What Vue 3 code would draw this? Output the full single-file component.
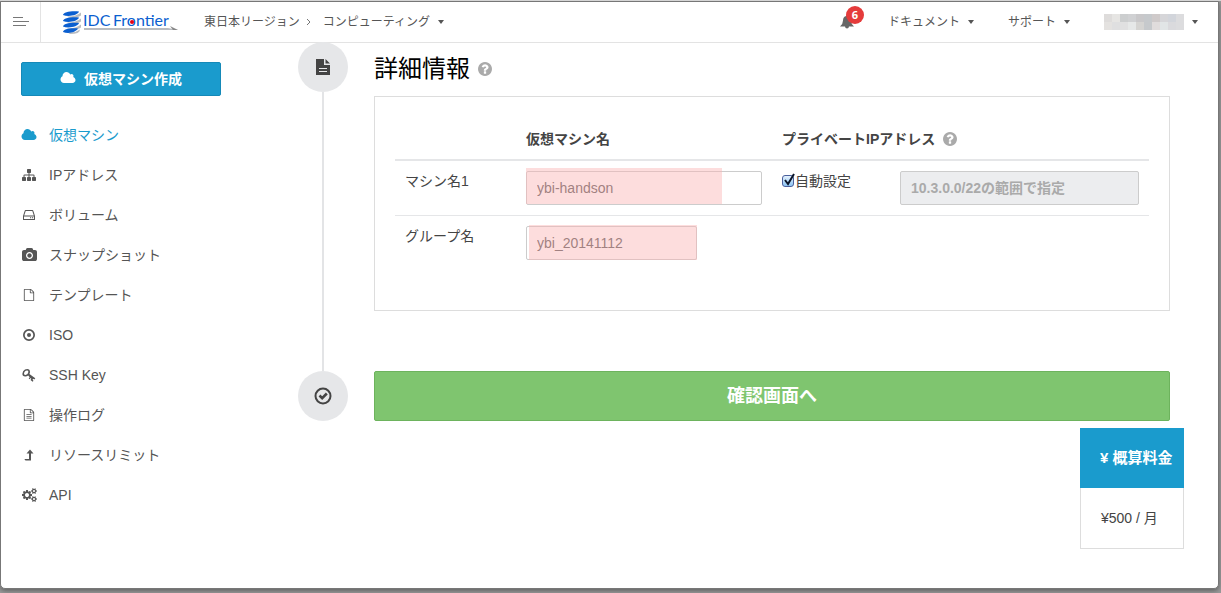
<template>
    <div class="window">
        <header class="topbar">
            <button class="menu-toggle" type="button" aria-label="メニュー">
                <svg width="16" height="10" viewBox="0 0 16 10">
                    <path d="M0 .5h10M0 4.5h16M0 8.5h13" stroke="#777" fill="none" />
                </svg>
            </button>

            <a class="logo" href="#">
                <svg width="118" height="26" viewBox="0 0 118 26">
                    <g fill="#b9bcc0">
                        <path d="M5 7.500Q13 8 19 3.500v3Q16 9 8 9zM5 13.500Q13 14 19 9.500v3Q16 15 8 15zM5 19.500Q13 20 19 15.500v3Q16 21 8 21zM3 22Q12 25 18 20.500Q18 25 8 25z" />
                    </g>
                    <g fill="#0b5fd0">
                        <path d="M1 6C1 3 10 1.500 17 2.500C16 6.500 6 8 1 6z" />
                        <path d="M1 12C1 9 10 7.500 17 8.500C16 12.500 6 14 1 12z" />
                        <path d="M1 17.500C1 14.500 10 13 17 14C16 18 6 19.500 1 17.500z" />
                        <path d="M1 23C1 20 9 18.500 16 19.500C14 23.500 6 25 1 23z" />
                    </g>
                    <text y="17" class="logo-text"><tspan x="21">IDC</tspan><tspan x="51">Frontier</tspan></text>
                    <path d="M22 19h84l10 2H22z" fill="#b9bcc0" />
                    <path d="M108 17l8 4h-5z" fill="#888" />
                    <circle cx="70" cy="13" r="2" fill="#e60012" />
                </svg>
            </a>

            <nav class="breadcrumb">
                <a href="#">東日本リージョン</a>
                <svg class="chevron" width="5" height="8" viewBox="0 0 5 8">
                    <path d="M1 1l3 3-3 3" fill="none" stroke="#777" />
                </svg>
                <a href="#" class="dropdown">コンピューティング<span class="caret"></span></a>
            </nav>

            <div class="topbar-right">
                <button class="bell" type="button" aria-label="お知らせ">
                    <svg width="14" height="14" viewBox="0 0 14 14">
                        <path d="M7 0q.8 0 .8 1Q11 1.600 11 5.500q0 3.500 3 6H9q-.2 2-2 2t-2-2H0q3-2.500 3-6Q3 1.600 6.200 1 6.200 0 7 0z" fill="#666" />
                    </svg>
                    <span class="badge">6</span>
                </button>
                <a href="#" class="dropdown">ドキュメント<span class="caret"></span></a>
                <a href="#" class="dropdown">サポート<span class="caret"></span></a>
                <button class="dropdown account" type="button" aria-label="アカウント">
                    <svg width="80" height="16" viewBox="0 0 10 2" shape-rendering="crispEdges">
                        <rect v-for="(color, i) in accountTiles" :key="i" :x="i % 10" :y="Math.floor(i / 10)"
                            width="1" height="1" :fill="color" />
                    </svg>
                    <span class="caret"></span>
                </button>
            </div>
        </header>

        <div class="body">
            <aside class="sidebar">
                <button class="create" type="button">
                    <svg width="16" height="14" viewBox="0 0 2048 1792">
                        <path :d="cloud" fill="#fff" />
                    </svg>
                    仮想マシン作成
                </button>

                <ul class="menu">
                    <li v-for="item in menu" :key="item.label">
                        <a href="#" :class="{ active: item.active }">
                            <span class="menu-icon">
                                <svg :width="item.width || 14" height="14" :viewBox="item.box || '0 0 1792 1792'">
                                    <path :d="item.path" fill="currentColor" fill-rule="evenodd" />
                                </svg>
                            </span>
                            {{ item.label }}
                        </a>
                    </li>
                </ul>
            </aside>

            <main class="steps">
                <section class="step">
                    <div class="rail">
                        <span class="marker">
                            <svg width="16" height="18" viewBox="0 0 16 18">
                                <path d="M1 1h8v6h6v10H1zM10.500 1L15 5.500h-4.500z" fill="#444" />
                                <path d="M4 10.500h8M4 13.500h8" stroke="#e6e7e9" />
                            </svg>
                        </span>
                        <span class="line"></span>
                    </div>

                    <div class="step-content">
                        <h1>
                            詳細情報
                            <svg class="help" width="14" height="14" viewBox="128 128 1536 1536">
                                <path :d="question" />
                            </svg>
                        </h1>

                        <div class="panel">
                            <table>
                                <colgroup>
                                    <col class="col-label">
                                    <col class="col-name">
                                    <col class="col-auto">
                                    <col>
                                </colgroup>
                                <thead>
                                    <tr>
                                        <th></th>
                                        <th>仮想マシン名</th>
                                        <th colspan="2">
                                            プライベートIPアドレス
                                            <svg class="help" width="14" height="14" viewBox="128 128 1536 1536">
                                                <path :d="question" />
                                            </svg>
                                        </th>
                                    </tr>
                                </thead>
                                <tbody>
                                    <tr>
                                        <td><label for="machine">マシン名1</label></td>
                                        <td>
                                            <div class="field mark-name">
                                                <input id="machine" v-model="machineName" type="text">
                                            </div>
                                        </td>
                                        <td>
                                            <label class="check">
                                                <input v-model="autoIp" type="checkbox">
                                                <svg v-if="autoIp" width="14" height="14" viewBox="0 0 14 14">
                                                    <path d="M3 7l3 4 6-10" fill="none" stroke="#0a1428" stroke-width="2" />
                                                </svg>
                                                自動設定
                                            </label>
                                        </td>
                                        <td>
                                            <input type="text" :disabled="autoIp" aria-label="プライベートIPアドレス"
                                                placeholder="10.3.0.0/22の範囲で指定">
                                        </td>
                                    </tr>
                                    <tr>
                                        <td><label for="group">グループ名</label></td>
                                        <td>
                                            <div class="field mark-group">
                                                <input id="group" v-model="groupName" type="text">
                                            </div>
                                        </td>
                                        <td></td>
                                        <td></td>
                                    </tr>
                                </tbody>
                            </table>
                        </div>
                    </div>
                </section>

                <section class="step">
                    <div class="rail">
                        <span class="marker">
                            <svg width="18" height="18" viewBox="0 0 18 18" fill="none" stroke="#444">
                                <circle cx="9" cy="9" r="7.500" stroke-width="2" />
                                <path d="M5.500 8.500L8.200 11.200 12.800 6.500" stroke-width="2.600" />
                            </svg>
                        </span>
                    </div>
                    <div class="step-content">
                        <button class="confirm" type="button">確認画面へ</button>
                    </div>
                </section>
            </main>
        </div>

        <div class="estimate">
            <div class="estimate-title">¥ 概算料金</div>
            <div class="estimate-price">¥500 / 月</div>
        </div>
    </div>
</template>

<script setup>
import { ref } from 'vue'

const machineName = ref('ybi-handson')
const groupName = ref('ybi_20141112')
const autoIp = ref(true)

const accountTiles = [
    '#dedcdb', '#e6e5e3', '#cccecf', '#d0d1d3', '#c9c8ca', '#c6c9cc', '#cfcaca', '#d6d6d9', '#d2d5db', '#dcdcde',
    '#e4e2e0', '#dfdfe0', '#e0e0e1', '#e6e8e8', '#d5d4d2', '#c6c9cc', '#e0dcdc', '#e1e5e6', '#dadadd', '#dcdcde'
]

const cloud = 'M1984 1152q0 159-112.500 271.500t-271.500 112.500h-1088q-185 0-316.500-131.500t-131.500-316.500q0-132 71-241.500t187-163.500q-2-28-2-43 0-212 150-362t362-150q158 0 286.500 88t187.500 230q70-62 166-62 106 0 181 75t75 181q0 75-41 138 129 30 213 134.500t84 239.500z'
const sitemap = 'M1792 1248v320q0 40-28 68t-68 28h-320q-40 0-68-28t-28-68v-320q0-40 28-68t68-28h96v-192h-512v192h96q40 0 68 28t28 68v320q0 40-28 68t-68 28h-320q-40 0-68-28t-28-68v-320q0-40 28-68t68-28h96v-192h-512v192h96q40 0 68 28t28 68v320q0 40-28 68t-68 28h-320q-40 0-68-28t-28-68v-320q0-40 28-68t68-28h96v-192q0-52 38-90t90-38h512v-192h-96q-40 0-68-28t-28-68v-320q0-40 28-68t68-28h320q40 0 68 28t28 68v320q0 40-28 68t-68 28h-96v192h512q52 0 90 38t38 90v192h96q40 0 68 28t28 68z'
const camera = 'M896 672q119 0 203.500 84.500t84.500 203.500-84.500 203.500-203.500 84.500-203.500-84.500-84.500-203.500 84.500-203.500 203.500-84.500zm704-416q106 0 181 75t75 181v896q0 106-75 181t-181 75h-1408q-106 0-181-75t-75-181v-896q0-106 75-181t181-75h224l51-136q19-49 69.500-84.500t103.500-35.500h512q53 0 103.500 35.500t69.500 84.500l51 136h224zm-704 1152q185 0 316.500-131.500t131.500-316.500-131.500-316.500-316.500-131.500-316.500 131.500-131.500 316.500 131.500 316.500 316.500 131.500z'
const file = 'M1596 380q28 28 48 76t20 88v1152q0 40-28 68t-68 28h-1344q-40 0-68-28t-28-68v-1600q0-40 28-68t68-28h896q40 0 88 20t76 48zm-444-244v376h376q-10-29-22-41l-313-313q-12-12-41-22zm384 1528v-1024h-416q-40 0-68-28t-28-68v-416h-768v1536h1280z'
const cogs = 'M896 896q0-106-75-181t-181-75-181 75-75 181 75 181 181 75 181-75 75-181zm768 512q0-52-38-90t-90-38-90 38-38 90q0 53 37.500 90.500t90.500 37.500 90.500-37.500 37.500-90.500zm0-1024q0-52-38-90t-90-38-90 38-38 90q0 53 37.500 90.500t90.500 37.500 90.500-37.500 37.500-90.500zm-384 421v185q0 10-7 19.500t-16 10.500l-155 24q-11 35-32 76 34 48 90 115 7 11 7 20 0 12-7 19-23 30-82.500 89.500t-78.500 59.500q-11 0-21-7l-115-90q-37 19-77 31-11 108-23 155-7 24-30 24h-186q-11 0-20-7.500t-10-17.500l-23-153q-34-10-75-31l-118 89q-7 7-20 7-11 0-21-8-144-133-144-160 0-9 7-19 10-14 41-53t47-61q-23-44-35-82l-152-24q-10-1-17-9.500t-7-19.500v-185q0-10 7-19.500t16-10.500l155-24q11-35 32-76-34-48-90-115-7-11-7-20 0-12 7-20 22-30 82-89t79-59q11 0 21 7l115 90q34-18 77-32 11-108 23-154 7-24 30-24h186q11 0 20 7.500t10 17.500l23 153q34 10 75 31l118-89q8-7 20-7 11 0 21 8 144 133 144 160 0 8-7 19-12 16-42 54t-45 60q23 48 34 82l152 23q10 2 17 10.500t7 19.500zm640 533v140q0 16-149 31-12 27-30 52 51 113 51 138 0 4-4 7-122 71-124 71-8 0-46-47t-52-68q-20 2-30 2t-30-2q-14 21-52 68t-46 47q-2 0-124-71-4-3-4-7 0-25 51-138-18-25-30-52-149-15-149-31v-140q0-16 149-31 13-29 30-52-51-113-51-138 0-4 4-7 4-2 35-20t59-34 30-16q8 0 46 46.500t52 67.500q20-2 30-2t30 2q51-71 92-112l6-2q4 0 124 70 4 3 4 7 0 25-51 138 17 23 30 52 149 15 149 31zm0-1024v140q0 16-149 31-12 27-30 52 51 113 51 138 0 4-4 7-122 71-124 71-8 0-46-47t-52-68q-20 2-30 2t-30-2q-14 21-52 68t-46 47q-2 0-124-71-4-3-4-7 0-25 51-138-18-25-30-52-149-15-149-31v-140q0-16 149-31 13-29 30-52-51-113-51-138 0-4 4-7 4-2 35-20t59-34 30-16q8 0 46 46.500t52 67.500q20-2 30-2t30 2q51-71 92-112l6-2q4 0 124 70 4 3 4 7 0 25-51 138 17 23 30 52 149 15 149 31z'
const question = 'M1024 1376v-192q0-14-9-23t-23-9h-192q-14 0-23 9t-9 23v192q0 14 9 23t23 9h192q14 0 23-9t9-23zm256-672q0-88-55.500-163t-138.500-116-170-41q-243 0-371 213-15 24 8 42l132 100q7 6 19 6 16 0 25-12 53-68 86-92 34-24 86-24 48 0 85.500 26t37.500 59q0 38-20 61t-68 45q-63 28-115.500 86.500t-52.500 125.500v36q0 14 9 23t23 9h192q14 0 23-9t9-23q0-19 21.500-49.500t54.500-49.500q32-18 49-28.500t46-35 44.500-48 28-60.500 12.500-81zm384 192q0 209-103 385.500t-279.500 279.500-385.500 103-385.500-103-279.500-279.500-103-385.500 103-385.500 279.500-279.500 385.500-103 385.500 103 279.500 279.500 103 385.500z'

const menu = [
    { label: '仮想マシン', path: cloud, width: 16, box: '0 0 2048 1792', active: true },
    { label: 'IPアドレス', path: sitemap },
    { label: 'ボリューム', box: '0 0 14 14', path: 'M3.500 2h7Q11 2 11.200 2.600L13 8v3.500q0 .5-.5.500h-11q-.5 0-.5-.500V8l1.800-5.400Q3 2 3.500 2zM3.700 3L2.200 7.500h9.600L10.300 3zM2 8.500V11h10V8.500zM8 9.300h1.200v1H8zM10 9.300h1.200v1H10z' },
    { label: 'スナップショット', path: camera, width: 15, box: '-64 0 1920 1792' },
    { label: 'テンプレート', path: file, width: 12 },
    { label: 'ISO', box: '0 0 14 14', path: 'M7 1a6 6 0 1 0 0 12a6 6 0 1 0 0-12zM7 2.700a4.300 4.300 0 1 1 0 8.600a4.300 4.300 0 1 1 0-8.600zM7 5a2 2 0 1 0 0 4a2 2 0 1 0 0-4z' },
    { label: 'SSH Key', box: '0 0 14 14', path: 'M5.200 1Q8 1 8 4q0 1-.6 2L13.300 10.300l-1 1.200-1-.7-.8 1 1 .9-.8 1-2.200-1.800.8-1.100-.8-.7-.9 1.100-.9-.8 1-1.200L6.200 7.500Q5 8.600 3.200 8.600 .3 8.300 .4 5.700 .5 3 3 1.600 4 1 5.200 1zM5 2.600Q2.200 3 2 5.700 2.200 7 3.600 7 6 6.500 6.400 4 6.400 2.600 5 2.600z' },
    { label: '操作ログ', width: 12, path: file + 'M512 800h768v96h-768zM512 1056h768v96h-768zM512 1312h768v96h-768z' },
    { label: 'リソースリミット', box: '0 0 14 14', path: 'M8 1.500l3.500 4H9V12.500H3.500L2.300 11H7V5.500H4.500z' },
    { label: 'API', path: cogs, width: 15, box: '0 0 1920 1792' }
]
</script>

<style>
body {
    margin: 0;
    border-top: 1px solid #d5d5d5;
    background: #999;
}
</style>

<style scoped>
* {
    box-sizing: border-box;
}

.window {
    position: relative;
    min-height: calc(100vh - 5px);
    margin: 0 2px 4px 0;
    border: 1px solid #777;
    border-radius: 0 0 5px 5px;
    background: #fff;
    box-shadow: 0 2px 4px rgba(0, 0, 0, 0.35);
    color: #444;
    font: 14px/20px "Liberation Sans", "Noto Sans CJK JP", sans-serif;
}

a {
    color: #555;
    text-decoration: none;
}

button {
    font-family: inherit;
    cursor: pointer;
}

svg {
    display: block;
    flex-shrink: 0;
}

/* ヘッダー */
.topbar {
    display: flex;
    align-items: center;
    height: 40px;
    padding-right: 20px;
    box-shadow: 0 1px 0 #e3e3e3;
    font-size: 12px;
}

.menu-toggle {
    display: flex;
    align-items: center;
    justify-content: center;
    width: 40px;
    height: 40px;
    padding: 0;
    border: none;
    border-right: 1px solid #e3e3e3;
    background: none;
}

.logo {
    margin-left: 21px;
}

.logo-text {
    fill: #0b5fd0;
    font-family: Lato, sans-serif;
    font-size: 16px;
}

.breadcrumb {
    display: flex;
    align-items: center;
    margin-left: 24px;
}

.chevron {
    margin: 0 12px 0 6px;
}

.dropdown {
    display: flex;
    align-items: center;
    gap: 8px;
}

.caret {
    border: 3px solid transparent;
    border-top: 4px solid #555;
    border-bottom: none;
}

.topbar-right {
    display: flex;
    align-items: center;
    gap: 34px;
    margin-left: auto;
}

.bell,
.account {
    position: relative;
    padding: 0;
    border: none;
    background: none;
}

.badge {
    position: absolute;
    top: -9px;
    left: 6px;
    width: 18px;
    height: 18px;
    border-radius: 50%;
    background: #e53b3b;
    color: #fff;
    font: bold 11px/18px "Open Sans", sans-serif;
}

/* サイドバー */
.body {
    display: flex;
}

.sidebar {
    flex: 0 0 200px;
    margin: 20px 77px 0 20px;
}

.create {
    display: flex;
    align-items: center;
    justify-content: center;
    gap: 8px;
    width: 100%;
    height: 34px;
    padding: 0 0 2px;
    border: 1px solid #1589b8;
    border-radius: 2px;
    background: #1a9bcd;
    color: #fff;
    font-size: 14px;
    font-weight: bold;
}

.menu {
    margin: 19px 0 0;
    padding: 0;
    list-style: none;
}

.menu a {
    display: flex;
    align-items: center;
    gap: 12px;
    height: 40px;
}

.menu a.active {
    color: #1a9bcd;
}

.menu-icon {
    display: flex;
    justify-content: center;
    width: 16px;
}

/* ステップ */
.steps {
    flex: 1;
    min-width: 0;
    padding-right: 48px;
}

.step {
    display: flex;
    gap: 26px;
}

.rail {
    display: flex;
    flex-direction: column;
    align-items: center;
}

.marker {
    display: flex;
    align-items: center;
    justify-content: center;
    width: 50px;
    height: 50px;
    border-radius: 50%;
    background: #e6e7e9;
}

.line {
    flex: 1;
    width: 2px;
    background: #e3e4e6;
}

.step-content {
    flex: 1;
    min-width: 0;
}

h1 {
    display: flex;
    align-items: center;
    gap: 8px;
    height: 54px;
    margin: 0;
    color: #000;
    font-size: 24px;
    font-weight: normal;
}

.help {
    fill: #aaa;
}

.panel {
    margin-bottom: 60px;
    padding: 22px 20px 40px;
    border: 1px solid #ddd;
}

table {
    width: 100%;
    table-layout: fixed;
    border-spacing: 0;
}

.col-label {
    width: 121px;
}

.col-name {
    width: 256px;
}

.col-auto {
    width: 118px;
}

th,
td {
    padding: 10px;
    text-align: left;
    vertical-align: top;
}

th {
    border-bottom: 2px solid #e5e6e8;
}

th .help {
    display: inline-block;
    margin-left: 4px;
    vertical-align: -2px;
}

tbody tr + tr td {
    border-top: 1px solid #e5e6e8;
}

input[type="text"] {
    display: block;
    width: 100%;
    height: 34px;
    padding: 0 10px;
    border: 1px solid #ccc;
    border-radius: 2px;
    background: #fff;
    color: #555;
    font: inherit;
}

input[type="text"]:disabled {
    background: #ecedef;
}

input::placeholder {
    color: #aaa;
    font-weight: bold;
}

.field {
    position: relative;
}

.mark-group {
    width: 171px;
}

/* 入力箇所を示すマーカー */
.field::after {
    content: "";
    position: absolute;
    background: rgba(250, 181, 181, 0.46);
    pointer-events: none;
}

.mark-name::after {
    inset: -3px 40px 1px 0;
}

.mark-group::after {
    inset: -1px 0 0 3px;
}

.check {
    position: relative;
    display: flex;
    align-items: center;
    white-space: nowrap;
}

.check input {
    appearance: none;
    width: 12px;
    height: 12px;
    margin: 0 1px 0 0;
    border: 1px solid #4a5f9c;
    border-radius: 3px;
    background: linear-gradient(#e4f1fd, #8cc4f3);
}

.check svg {
    position: absolute;
    top: 2px;
    left: 0;
}

.confirm {
    width: 100%;
    height: 50px;
    padding: 0 0 4px;
    border: 1px solid #6db35d;
    border-radius: 2px;
    background: #7fc56f;
    color: #fff;
    font-size: 18px;
    font-weight: bold;
}

/* 概算料金 */
.estimate {
    position: absolute;
    right: 34px;
    bottom: 39px;
    width: 104px;
    line-height: 60px;
    white-space: nowrap;
}

.estimate-title {
    padding-left: 20px;
    background: #1a9bcd;
    color: #fff;
    font-size: 15px;
    font-weight: bold;
}

.estimate-price {
    padding-left: 20px;
    border: 1px solid #ddd;
    border-top: none;
}
</style>
